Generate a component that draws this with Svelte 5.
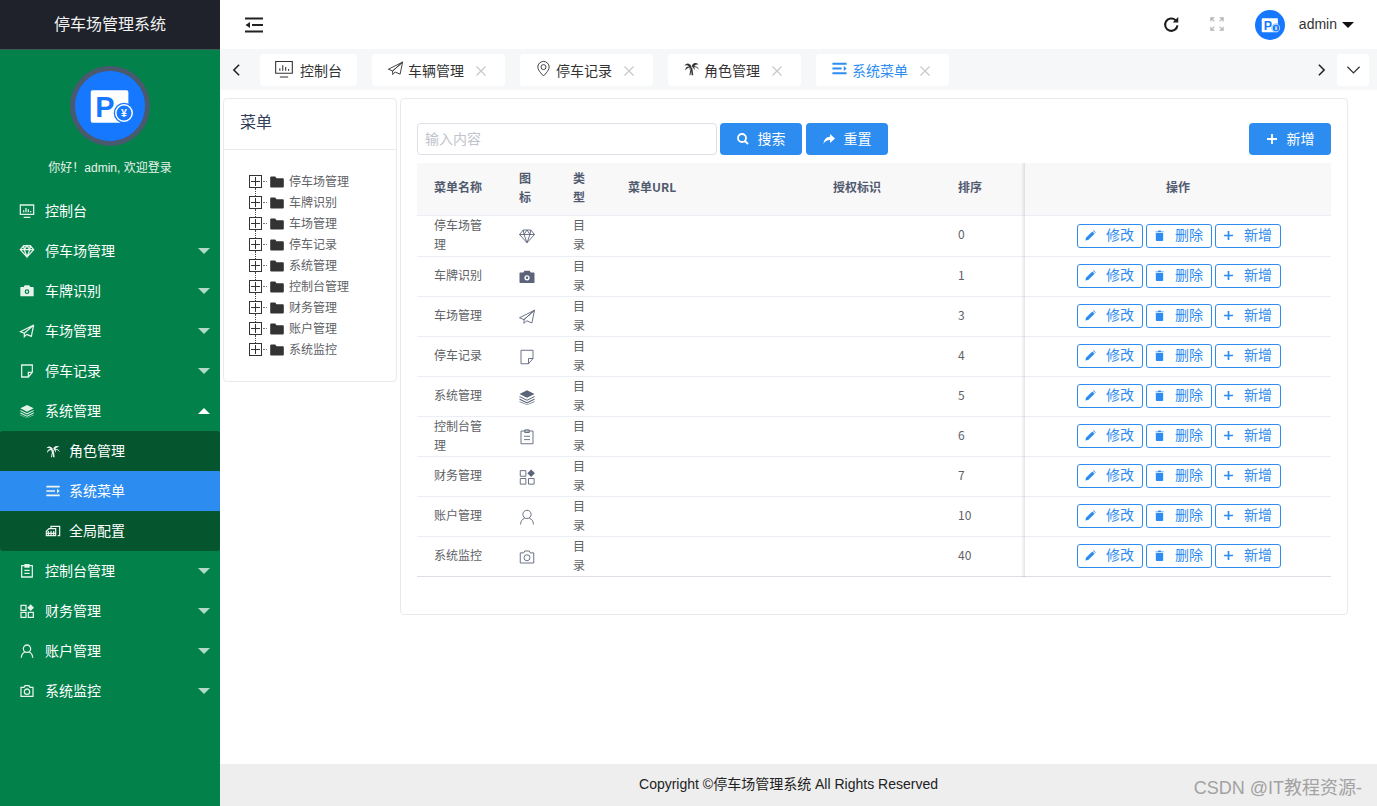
<script>
  const icons = {
    monitor: { s: 'M2 3h20v14H2z M7 21.500h10 M7 14v-3 M10.500 14V7.500 M14 14v-4.500 M17.500 14v-2' },
    diamond: { s: 'M7 4h10l5 6-10 11L2 10z M2 10h20 M8 10l4 11 4-11 M7 4l1 6 4-6 4 6 1-6' },
    camera: { f: 'M3 6h4l1.500-2.500h7L17 6h4a1 1 0 0 1 1 1v12a1 1 0 0 1-1 1H3a1 1 0 0 1-1-1V7a1 1 0 0 1 1-1zm9 3.500a3.500 3.500 0 1 0 0 7 3.500 3.500 0 0 0 0-7zm0 1.800a1.700 1.700 0 1 1 0 3.400 1.700 1.700 0 0 1 0-3.400z' },
    plane: { s: 'M22 3L2 13l6 2.500L22 3zM22 3l-14 12.500v5l3.500-3.500M22 3l-3.500 17-7-3' },
    note: { s: 'M4 3h16v11l-6 7H4z M20 14h-6v7' },
    layers: { f: 'M12 3l10 5-10 5L2 8z M2 10.500l10 5 10-5v1.600l-10 5-10-5z M2 14l10 5 10-5v1.600l-10 5-10-5z M2 17.500l10 4.500 10-4.500v1l-10 4-10-4z' },
    palm: { f: 'M12 9C9 4 5 4 2 8c3-1 5-.5 6.500 1C5 9 3 11 3 15c2-3 4-4 6.500-4.500L9 14c1-1 1.500-2 2-3zM12.500 9c1-5 5-6 9.500-3-3 0-5 1-6.500 3 3-.5 6 1 7 5-2-3-4.500-4-6.500-4 .5 1.500.5 3 0 4.500-.5-2-1.500-3.500-2.500-4.500zM11 10.500h2l1.500 11h-2.200l-.8-6-1 6H9z' },
    menu: { f: 'M2 4h20v2.600H2zM2 10.700h13v2.600H2zM2 17.400h20V20H2zM18 8.500l4 3.500-4 3.500z' },
    cards: { s: 'M9 8.500V5h13v14h-3 M6 8.500h10V19H2v-6.500z M5 12v7 M9 12v7 M13 12v7 M2 15.500h14' },
    clip: { s: 'M4 4h16v17H4z M9 2.500h6V6H9z M8 11h8 M8 15.500h8' },
    grid: { s: 'M3 3.500h7.500V11H3z M3 14h7.500v7.500H3z M14 14h7.500v7.500H14z', f: 'M17.500 2l5 5-5 5-5-5z' },
    user: { s: 'M12 3a5.500 5.500 0 1 0 0 11 5.500 5.500 0 0 0 0-11z M3.500 22c0-4.500 2-7 5.500-8.500 M20.500 22c0-4.500-2-7-5.500-8.500' },
    cam2: { s: 'M3 6.500h4.500L9 4h6l1.500 2.500H21V20H3z M12 9a4 4 0 1 0 0 8 4 4 0 0 0 0-8z' },
    pin: { s: 'M12 2a8 8 0 0 0-8 8c0 5 8 12.500 8 12.500S20 15 20 10a8 8 0 0 0-8-8z M12 6.500a3.500 3.500 0 1 0 0 7 3.500 3.500 0 0 0 0-7z' }
  };

  const nav = [
    { t: '控制台', i: 'monitor' },
    { t: '停车场管理', i: 'diamond', c: 1 },
    { t: '车牌识别', i: 'camera', c: 1 },
    { t: '车场管理', i: 'plane', c: 1 },
    { t: '停车记录', i: 'note', c: 1 },
    { t: '系统管理', i: 'layers', c: 1, open: 1, sub: [
      { t: '角色管理', i: 'palm' },
      { t: '系统菜单', i: 'menu', active: 1 },
      { t: '全局配置', i: 'cards' }
    ] },
    { t: '控制台管理', i: 'clip', c: 1 },
    { t: '财务管理', i: 'grid', c: 1 },
    { t: '账户管理', i: 'user', c: 1 },
    { t: '系统监控', i: 'cam2', c: 1 }
  ];

  const tabs = [
    { t: '车辆管理', i: 'plane' },
    { t: '停车记录', i: 'pin' },
    { t: '角色管理', i: 'palm' },
    { t: '系统菜单', i: 'menu', active: 1 }
  ];

  const tree = ['停车场管理', '车牌识别', '车场管理', '停车记录', '系统管理', '控制台管理', '财务管理', '账户管理', '系统监控'];

  const rows = [
    ['停车场管理', 'diamond', 0], ['车牌识别', 'camera', 1], ['车场管理', 'plane', 3],
    ['停车记录', 'note', 4], ['系统管理', 'layers', 5], ['控制台管理', 'clip', 6],
    ['财务管理', 'grid', 7], ['账户管理', 'user', 10], ['系统监控', 'cam2', 40]
  ];
</script>

{#snippet icon(name, cls)}
  <svg class={cls} viewBox="0 0 24 24" aria-hidden="true">
    {#if icons[name].s}<path class="st" d={icons[name].s} />{/if}
    {#if icons[name].f}<path class="fi" fill-rule="evenodd" d={icons[name].f} />{/if}
  </svg>
{/snippet}

{#snippet logo(cls)}
  <svg class={cls} viewBox="0 0 80 80" aria-hidden="true">
    <circle cx="40" cy="40" r="40" fill="#1677ff" />
    <rect x="18" y="22" width="43" height="37" rx="2" fill="#fff" />
    <text x="23" y="53" class="logo-p">P</text>
    <circle cx="56" cy="48" r="11" fill="#fff" stroke="#1677ff" stroke-width="1.500" />
    <circle cx="56" cy="48" r="8.500" fill="#1677ff" />
    <text x="56" y="52.500" class="logo-y" text-anchor="middle">¥</text>
  </svg>
{/snippet}

{#snippet plus()}
  <svg class="b-ic" viewBox="0 0 12 12" aria-hidden="true"><path class="st" d="M6 1v10M1 6h10" /></svg>
{/snippet}

<div class="app">
  <aside class="side">
    <div class="brand">停车场管理系统</div>
    <div class="profile">
      <div class="avatar">{@render logo('avatar-svg')}</div>
      <div class="hello">你好！admin, 欢迎登录</div>
    </div>
    <nav>
      {#each nav as n}
        <div class="item">
          {@render icon(n.i, 'nav-ic')}
          <span class="lbl">{n.t}</span>
          {#if n.c}<i class="caret" class:up={n.open}></i>{/if}
        </div>
        {#if n.sub}
          <div class="sub">
            {#each n.sub as s}
              <div class="sitem" class:on={s.active}>
                {@render icon(s.i, 'sub-ic')}
                <span class="lbl">{s.t}</span>
              </div>
            {/each}
          </div>
        {/if}
      {/each}
    </nav>
  </aside>

  <div class="main">
    <header class="top">
      <svg class="collapse" viewBox="0 0 18 16" aria-hidden="true">
        <path d="M0 0.500h18v2H0zM7 7h11v2H7zM0 13.500h18v2H0zM5 5v6L0.500 8z" />
      </svg>
      <div class="top-right">
        <svg class="refresh" viewBox="0 0 24 24" aria-hidden="true">
          <path class="st" d="M19.500 13a7.800 7.800 0 1 1-2.300-6.400" />
          <path class="fi" d="M20.500 2.500v7h-7z" />
        </svg>
        <svg class="full" viewBox="0 0 16 16" aria-hidden="true">
          <path class="st" d="M1 5V1h4M1 1l4 4M11 1h4v4M15 1l-4 4M1 11v4h4M1 15l4-4M11 15h4v-4M15 15l-4-4" />
        </svg>
        {@render logo('mini')}
        <span class="uname">admin</span>
        <i class="ucaret"></i>
      </div>
    </header>

    <div class="tabs">
      <svg class="arrow" viewBox="0 0 10 16" aria-hidden="true"><path class="st" d="M8 2L2 8l6 6" /></svg>
      <div class="tablist">
        <div class="tab home">{@render icon('monitor', 'tab-ic')}<span>控制台</span></div>
        {#each tabs as t}
          <div class="tab" class:on={t.active}>
            {@render icon(t.i, 'tab-ic')}
            <span>{t.t}</span>
            <svg class="x" viewBox="0 0 12 12" aria-hidden="true"><path class="st" d="M1.500 1.500l9 9M10.500 1.500l-9 9" /></svg>
          </div>
        {/each}
      </div>
      <svg class="arrow right" viewBox="0 0 10 16" aria-hidden="true"><path class="st" d="M2 2l6 6-6 6" /></svg>
      <div class="drop">
        <svg viewBox="0 0 16 10" aria-hidden="true"><path class="st" d="M1.500 1.500L8 8l6.500-6.500" /></svg>
      </div>
    </div>

    <main class="content">
      <section class="card treecard">
        <h3>菜单</h3>
        <ul class="tree">
          {#each tree as t}
            <li>
              <span class="box"></span>
              <span class="dots"></span>
              <svg class="folder" viewBox="0 0 14 12" aria-hidden="true">
                <path d="M1.200 0.500h4l1.300 1.800h6.300a1 1 0 0 1 1 1v7.200a1 1 0 0 1-1 1H1.200a1 1 0 0 1-1-1V1.500a1 1 0 0 1 1-1z" />
              </svg>
              <span class="tt">{t}</span>
            </li>
          {/each}
        </ul>
      </section>

      <section class="card tablecard">
        <div class="bar">
          <input placeholder="输入内容" />
          <button class="btn first">
            <svg class="b-ic" viewBox="0 0 12 12" aria-hidden="true"><path class="st" d="M5 1a4 4 0 1 0 0 8 4 4 0 0 0 0-8zM8 8l3 3" /></svg>
            <span>搜索</span>
          </button>
          <button class="btn">
            <svg class="b-ic" viewBox="0 0 12 12" aria-hidden="true"><path class="fi" d="M7 1l5 4.500L7 10V7C4 7 2 8 0.500 11 1 6.500 3 4 7 3.800z" /></svg>
            <span>重置</span>
          </button>
          <button class="btn push">{@render plus()}<span>新增</span></button>
        </div>

        <table>
          <colgroup>
            <col class="c1" /><col class="c2" /><col class="c3" /><col class="c4" /><col class="c5" /><col class="c6" /><col />
          </colgroup>
          <thead>
            <tr>
              <th>菜单名称</th><th>图标</th><th>类型</th><th>菜单URL</th><th>授权标识</th><th>排序</th><th class="op">操作</th>
            </tr>
          </thead>
          <tbody>
            {#each rows as r}
              <tr>
                <td>{r[0]}</td>
                <td class="ic">{@render icon(r[1], 'row-ic')}</td>
                <td>目录</td>
                <td></td>
                <td></td>
                <td>{r[2]}</td>
                <td class="op">
                  <div class="acts">
                    <button class="mini-btn">
                      <svg class="b-ic" viewBox="0 0 12 12" aria-hidden="true"><path class="fi" d="M0.500 11.500l.5-3L8 1.500l2.500 2.500-7 7zM8.800 0.800l.7-.5 2.200 2.200-.5.700z" /></svg>
                      <span>修改</span>
                    </button>
                    <button class="mini-btn">
                      <svg class="b-ic" viewBox="0 0 12 12" aria-hidden="true"><path class="fi" d="M2 3.200h8v7.800a1 1 0 0 1-1 1H3a1 1 0 0 1-1-1zM1.500 1.500h3V0.500h3v1h3v1h-9z" /></svg>
                      <span>删除</span>
                    </button>
                    <button class="mini-btn">{@render plus()}<span>新增</span></button>
                  </div>
                </td>
              </tr>
            {/each}
          </tbody>
        </table>
      </section>
    </main>

    <footer><span>Copyright ©停车场管理系统 All Rights Reserved</span></footer>
  </div>
  <div class="mark">CSDN @IT教程资源-</div>
</div>

<style>
  :global(body) {
    margin: 0;
    font-family: "Liberation Sans", "Noto Sans CJK SC", sans-serif;
    background: #fff;
  }
  .st { fill: none; stroke: currentColor; stroke-width: 1.800; }
  .fi { fill: currentColor; stroke: none; }

  .app { display: flex; height: 806px; overflow: hidden; position: relative; }

  .side { width: 220px; flex: none; background: #03814a; color: #fff; }
  .brand {
    height: 49px; line-height: 49px; background: #1f222b; text-align: center;
    font-size: 16px; border-bottom: 1px solid #3c5c55; color: #f2f2f2; box-sizing: content-box;
  }
  .profile { display: flex; flex-direction: column; align-items: center; padding-top: 16px; height: 141px; box-sizing: border-box; }
  .avatar {
    width: 70px; height: 70px; border: 5px solid #4a5a6e; border-radius: 50%;
    overflow: hidden; background: #1677ff;
  }
  .avatar-svg { display: block; width: 70px; height: 70px; }
  .logo-p { font: 700 33px "Liberation Sans", sans-serif; fill: #1677ff; }
  .logo-y { font: 700 12px "Liberation Sans", sans-serif; fill: #fff; }
  .hello { margin-top: 14px; font-size: 12px; line-height: 16px; color: #e8f4ec; }

  .item, .sitem { height: 40px; display: flex; align-items: center; font-size: 14px; position: relative; }
  .item { padding-left: 19px; }
  .lbl { padding-bottom: 2px; }
  .nav-ic { width: 16px; height: 16px; margin-right: 10px; flex: none; color: #e4f2ea; }
  .nav-ic .st { stroke-width: 1.900; }
  .caret {
    position: absolute; left: 198px; top: 17px; width: 0; height: 0;
    border-left: 6px solid transparent; border-right: 6px solid transparent;
    border-top: 6px solid rgba(255,255,255,.7);
  }
  .caret.up { border-top: 0; border-bottom: 6px solid #fff; }
  .sub { background: #05552f; border-radius: 3px; }
  .sitem { padding-left: 45px; }
  .sitem.on { background: #2d8cf0; }
  .sub-ic { width: 16px; height: 16px; margin-right: 8px; flex: none; color: #f0f5f2; }
  .sub-ic .st { stroke-width: 1.800; }

  .main { flex: 1; min-width: 0; display: flex; flex-direction: column; }
  .top { height: 49px; flex: none; display: flex; align-items: center; padding-left: 25px; padding-right: 23px; }
  .collapse { width: 18px; height: 16px; fill: #222; }
  .top-right { margin-left: auto; display: flex; align-items: center; color: #222; }
  .refresh { width: 19px; height: 19px; color: #1d1d1d; margin-right: 29px; }
  .refresh .st { stroke-width: 2.600; }
  .full { width: 14px; height: 14px; color: #b0b0b0; margin-right: 31px; margin-bottom: 1px; }
  .full .st { stroke-width: 1.200; }
  .mini { width: 30px; height: 30px; margin-right: 14px; }
  .uname { font-size: 14px; color: #333; padding-bottom: 2px; }
  .ucaret {
    width: 0; height: 0; margin-left: 5px;
    border-left: 6px solid transparent; border-right: 6px solid transparent; border-top: 6px solid #111;
  }

  .tabs { height: 41px; flex: none; background: #f5f7f9; display: flex; align-items: center; box-sizing: border-box; padding: 0 8px 0 12px; }
  .arrow { width: 9px; height: 14px; color: #222; flex: none; }
  .tablist { display: flex; gap: 15px; margin-left: 19px; }
  .tab {
    height: 32px; background: #fff; border-radius: 3px; display: flex; align-items: center;
    font-size: 14px; color: #333; padding: 0 18px 0 15px; box-sizing: border-box;
  }
  .tab.home { padding-right: 15px; padding-left: 14px; }
  .tab-ic { width: 17px; height: 17px; margin-right: 4px; flex: none; margin-bottom: 2px; }
  .tab-ic .st { stroke-width: 1.300; }
  .tab.home .tab-ic { width: 20px; height: 20px; margin-left: 0; margin-right: 6px; }
  .tab.on { color: #2d8cf0; }
  .x { width: 12px; height: 12px; margin-left: 11px; margin-top: 2px; color: #c8c8c8; }
  .x .st { stroke-width: 1.200; }
  .arrow.right { margin-left: auto; margin-right: 11px; }
  .drop { width: 32px; height: 32px; background: #fff; border-radius: 3px; display: flex; align-items: center; justify-content: center; flex: none; }
  .drop svg { width: 15px; height: 10px; color: #333; }
  .drop .st { stroke-width: 1.300; }

  .content { flex: 1; display: flex; align-items: flex-start; gap: 3px; padding: 8px 29px 0 3px; min-height: 0; }
  .card { background: #fff; border: 1px solid #e8eaec; border-radius: 4px; box-sizing: border-box; }
  .treecard { width: 174px; height: 284px; flex: none; }
  .treecard h3 {
    margin: 0; height: 51px; line-height: 48px; padding-left: 16px; font-size: 16px; font-weight: 400;
    color: #33405c; border-bottom: 1px solid #e8eaec; box-sizing: border-box;
  }
  .tree { list-style: none; margin: 0; padding: 21px 0 0 25px; }
  .tree li { height: 21px; display: flex; align-items: center; position: relative; font-size: 12px; color: #606266; }
  .tt { padding-bottom: 2px; }
  .tree li:not(:last-child)::after {
    content: ""; position: absolute; left: 6px; top: 17px; height: 8px;
    border-left: 1px dotted #444;
  }
  .box {
    width: 13px; height: 13px; box-sizing: border-box; border: 1px solid #333; flex: none; position: relative;
    background: linear-gradient(#333,#333) center/9px 1px no-repeat, linear-gradient(#333,#333) center/1px 9px no-repeat;
  }
  .dots { width: 4px; border-top: 1px dotted #777; flex: none; margin: 0 3px 0 1px; }
  .folder { width: 14px; height: 12px; fill: #333; margin-right: 5px; flex: none; }

  .tablecard { flex: 1; height: 517px; padding: 24px 16px 0 16px; min-width: 0; }
  .bar { display: flex; gap: 4px; height: 32px; margin-bottom: 8px; }
  input {
    width: 300px; height: 32px; margin-right: -1px; box-sizing: border-box; border: 1px solid #dcdfe6; border-radius: 4px;
    padding: 0 7px 2px; font: 14px "Noto Sans CJK SC", sans-serif; outline: none;
  }
  input::placeholder { color: #c0c4cc; }
  .btn {
    width: 82px; height: 32px; background: #2d8cf0; border: 0; border-radius: 4px; color: #fff;
    font: 14px "Noto Sans CJK SC", sans-serif; display: flex; align-items: center; justify-content: center; gap: 9px; padding: 0;
  }
  .btn span { padding-bottom: 3px; }
  .btn .b-ic { width: 12px; height: 12px; }
  .btn.push { margin-left: auto; }

  table { width: 914px; border-collapse: separate; border-spacing: 0; table-layout: fixed; font-size: 12px; color: #606266; font-family: "Noto Sans CJK SC", sans-serif; }
  .c1 { width: 85px; } .c2 { width: 54px; } .c3 { width: 55px; } .c4 { width: 205px; } .c5 { width: 125px; } .c6 { width: 84px; }
  th, td { padding: 0 17px; border-bottom: 1px solid #ebeef5; text-align: left; line-height: 18.500px; box-sizing: border-box; word-break: break-all; }
  th { height: 53px; background: #f8f8f9; color: #515a6e; font-weight: 700; padding-bottom: 3px; }
  td { height: 40px; padding-bottom: 2px; }
  tbody tr:first-child td { height: 41px; padding-bottom: 3px; }
  tbody tr:last-child td { border-bottom-color: #dcdfe6; }
  th.op, td.op { text-align: center; padding-left: 0; padding-right: 0; position: relative; }
  td.op { padding-bottom: 2px; }
  tbody tr:first-child td.op { padding-bottom: 1px; }
  th.op::before, td.op::before {
    content: ""; position: absolute; left: -4px; top: 0; bottom: -1px; width: 4px;
    background: linear-gradient(to left, rgba(0,0,0,.1), rgba(0,0,0,0));
  }
  td.ic, tbody tr:first-child td.ic { padding-bottom: 0; }
  .row-ic { width: 18px; height: 18px; display: block; color: #5b6478; margin-left: -1px; }
  .row-ic .st { stroke-width: 1.200; }
  .acts { display: flex; justify-content: center; gap: 3px; padding-left: 1px; }
  .mini-btn {
    height: 24px; width: 66px; background: #fff; border: 1px solid #2d8cf0; border-radius: 3px; color: #2d8cf0;
    font: 14px "Noto Sans CJK SC", sans-serif; display: flex; align-items: center; justify-content: center; gap: 10px; padding: 0;
  }
  .mini-btn span { padding-bottom: 3px; }
  .mini-btn .b-ic { width: 11px; height: 11px; }

  footer {
    height: 42px; flex: none; background: #eee; display: flex; align-items: center; justify-content: center;
    font-size: 14px; color: #222; padding-right: 20px;
  }
  footer span { padding-bottom: 4px; }
  .mark {
    position: absolute; right: 15px; bottom: 6px; font-size: 18px; line-height: 24px; color: #a2a2a2;
    font-family: "Liberation Sans", "Noto Sans CJK SC", sans-serif;
  }
</style>
